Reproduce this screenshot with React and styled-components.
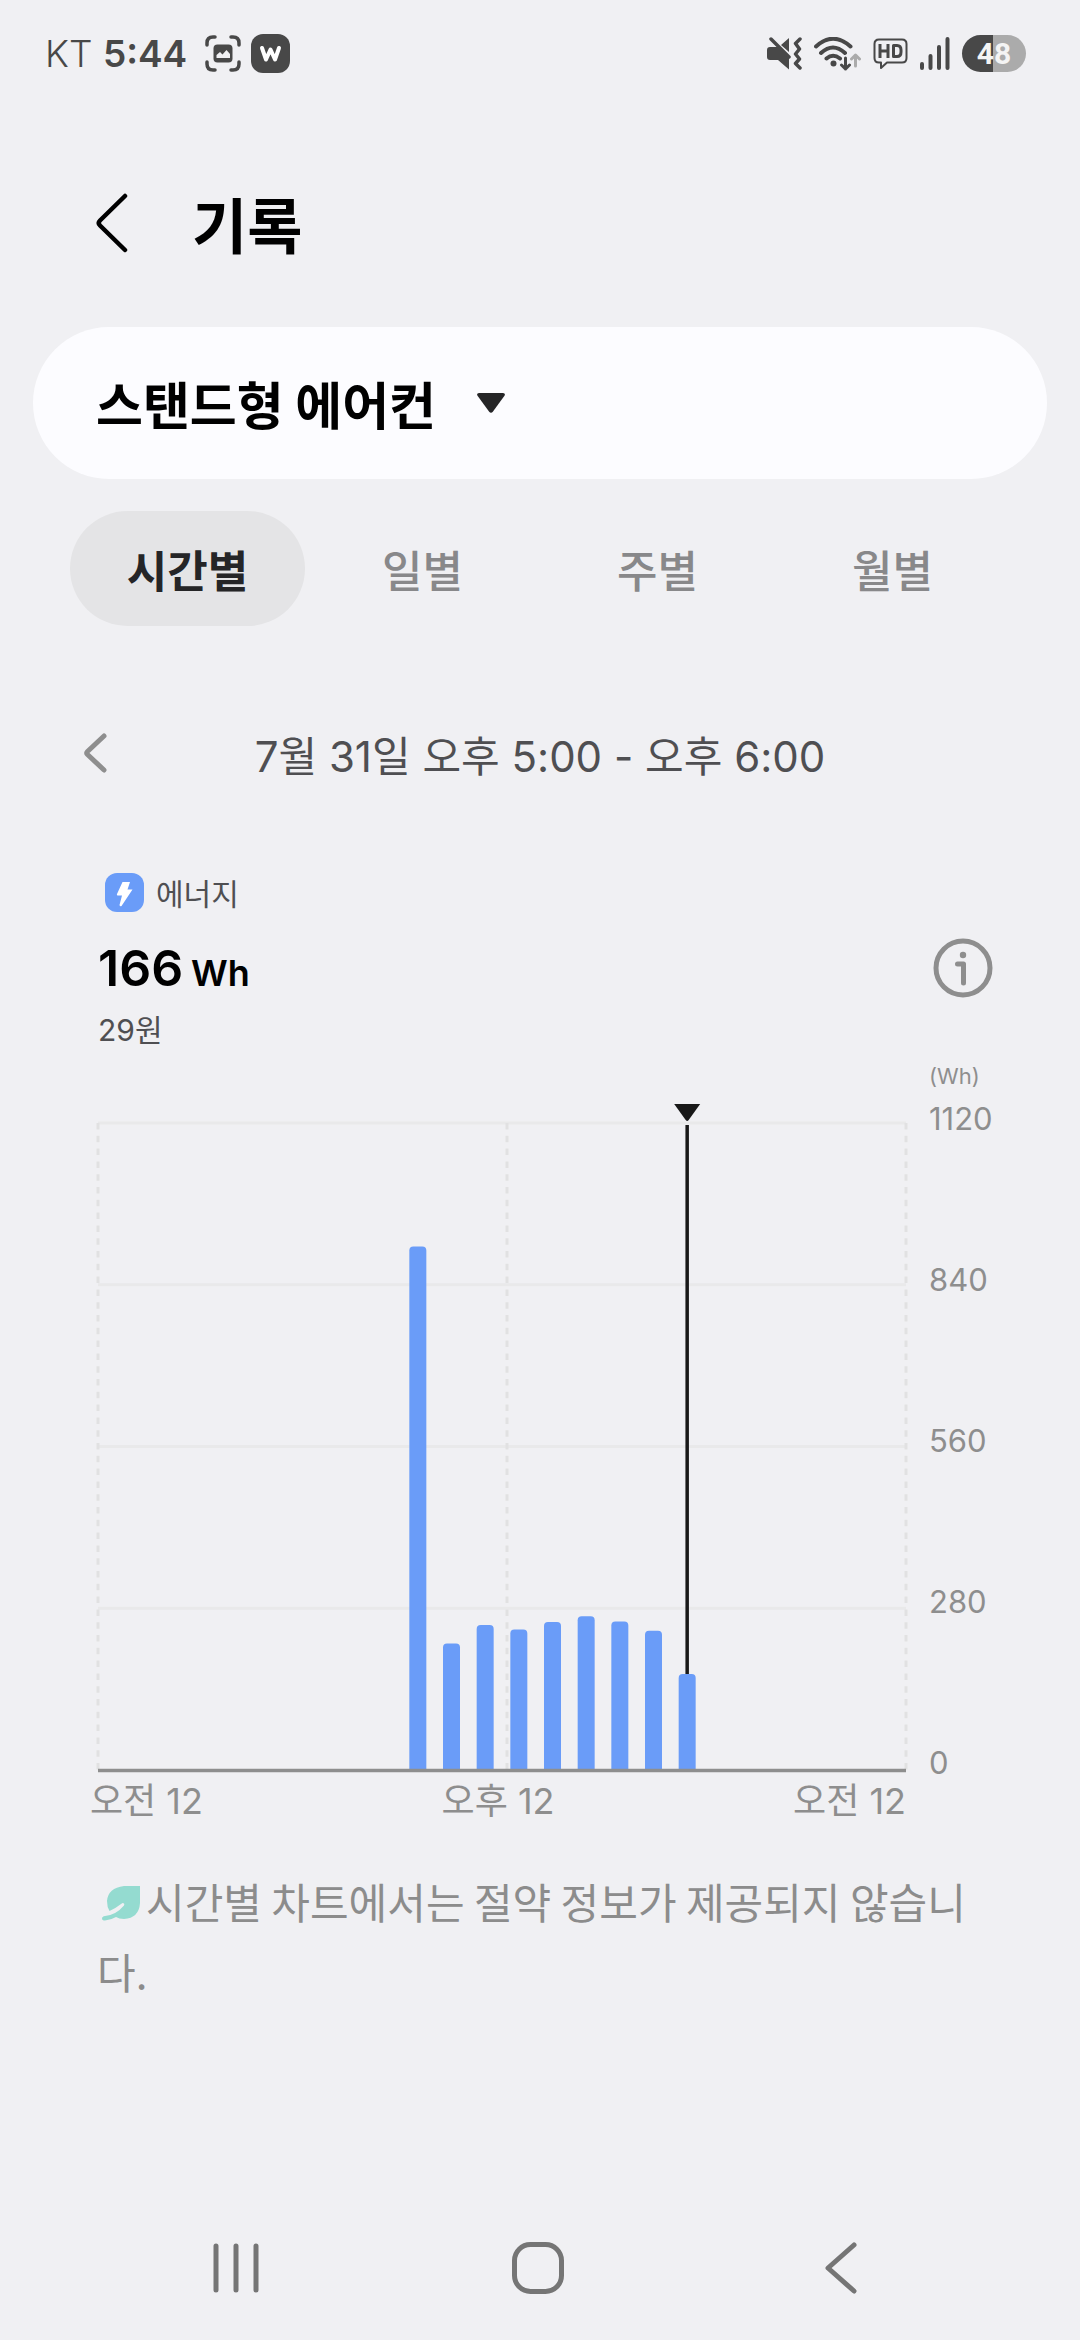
import React, {useState} from 'react';
import styled, {createGlobalStyle} from 'styled-components';

const TABS = ['시간별', '일별', '주별', '월별'];

// Hourly consumption in Wh
const USAGE = [
    {hour: 9, value: 906},
    {hour: 10, value: 219},
    {hour: 11, value: 251},
    {hour: 12, value: 243},
    {hour: 13, value: 256},
    {hour: 14, value: 266},
    {hour: 15, value: 257},
    {hour: 16, value: 241},
    {hour: 17, value: 166},
];

const MAX = 1120;
const SCALE = [1120, 840, 560, 280, 0];
const PLOT = {left: 8, right: 816, top: 23, bottom: 670};

const App = () => {

    const [tab, setTab] = useState('시간별');

    return (
        <>
            <GlobalStyle/>
            <Page>
                <StatusBar/>

                <Header>
                    <IconButton aria-label="뒤로">
                        <svg width="32" height="60" viewBox="0 0 32 60">
                            <path d="M29 3L4 27.5Q1.5 30 4 32.5L29 57" fill="none" stroke="#000" strokeWidth="4.5" strokeLinecap="round"/>
                        </svg>
                    </IconButton>
                    <h1>기록</h1>
                </Header>

                <main>
                    <DeviceCard>
                        <select aria-label="기기" defaultValue="ac">
                            <option value="ac">스탠드형 에어컨</option>
                        </select>
                        <svg width="28" height="20" viewBox="0 0 28 20">
                            <path d="M2 0H26Q29 .5 27.3 3L16 18.5Q14 21 12 18.5L.7 3Q-1 .5 2 0Z" fill="#252527"/>
                        </svg>
                    </DeviceCard>

                    <Tabs role="tablist">
                        {TABS.map((name) => (
                            <Tab
                                key={name}
                                role="tab"
                                aria-selected={tab === name}
                                $active={tab === name}
                                onClick={() => setTab(name)}
                            >
                                {name}
                            </Tab>
                        ))}
                    </Tabs>

                    <Period>
                        <IconButton aria-label="이전">
                            <svg width="50" height="40" viewBox="0 0 50 40">
                                <path d="M34 3L17.5 18.5Q16 20 17.5 21.5L34 37" fill="none" stroke="#8e8e8e" strokeWidth="5" strokeLinecap="round"/>
                            </svg>
                        </IconButton>
                        <p>7월 31일 오후 5:00 - 오후 6:00</p>
                        <span/>
                    </Period>

                    <Summary>
                        <div>
                            <Kind>
                                <svg width="39" height="39" viewBox="0 0 39 39">
                                    <rect width="39" height="39" rx="12" fill="#6a9cf8"/>
                                    <path d="M17.5 9H25L22.5 16.5H27.5L16.5 33Q15 34 14.5 32L17 22.5H12.5Q11.5 22 12 21Z" fill="#fff"/>
                                </svg>
                                에너지
                            </Kind>
                            <Amount>166<small>Wh</small></Amount>
                            <Cost>29원</Cost>
                        </div>
                        <InfoButton aria-label="정보">
                            <svg width="60" height="60" viewBox="0 0 60 60" fill="none" stroke="#8e8e8e" strokeLinecap="round" strokeLinejoin="round">
                                <circle cx="30" cy="30" r="27" strokeWidth="5"/>
                                <circle cx="30" cy="17" r="3.2" fill="#8e8e8e" stroke="none"/>
                                <path d="M24.5 26H30.5V45" strokeWidth="5"/>
                            </svg>
                        </InfoButton>
                    </Summary>

                    <UsageChart/>

                    <Note>
                        <svg width="38" height="35" viewBox="0 0 38 35">
                            <path d="M22 0H38V17Q37 32 22 33Q17 33 14 31Q9 34 3 34.5Q0 34.5 0 32.5Q0 30.5 3 30Q14 29 22 19.5Q23 17 20.5 17Q14 22 7.5 25Q5 21 5 15Q6 2 22 0Z" fill="#94dbd0"/>
                        </svg>
                        시간별 차트에서는 절약 정보가 제공되지 않습니다.
                    </Note>
                </main>

                <NavBar>
                    <IconButton aria-label="최근 앱">
                        <svg width="46" height="50" viewBox="0 0 46 50">
                            <path d="M3 3V47M23 3V47M43 3V47" stroke="#757575" strokeWidth="5" strokeLinecap="round"/>
                        </svg>
                    </IconButton>
                    <IconButton aria-label="홈">
                        <svg width="52" height="52" viewBox="0 0 52 52">
                            <rect x="2.5" y="2.5" width="47" height="47" rx="16" fill="none" stroke="#757575" strokeWidth="5"/>
                        </svg>
                    </IconButton>
                    <IconButton aria-label="뒤로 가기">
                        <svg width="32" height="52" viewBox="0 0 32 52">
                            <path d="M29 3L3 26L29 49" fill="none" stroke="#757575" strokeWidth="5" strokeLinecap="round" strokeLinejoin="round"/>
                        </svg>
                    </IconButton>
                </NavBar>
            </Page>
        </>
    )
}

// Status bar
const StatusBar = () => {
    return (
        <Status>
            <Clock>KT <b>5:44</b></Clock>
            <svg width="36" height="37" viewBox="0 0 36 37">
                <path d="M2 10V8Q2 2 8 2H10M26 2H28Q34 2 34 8V10M34 27V29Q34 35 28 35H26M10 35H8Q2 35 2 29V27" fill="none" stroke="#484848" strokeWidth="3.5" strokeLinecap="round"/>
                <rect x="8.5" y="9.5" width="19" height="18" rx="4" fill="#484848"/>
                <path d="M11.5 23V20L15 17L17.5 19.5L21.5 15L25 19V23Z" fill="#f0f0f3"/>
            </svg>
            <svg width="39" height="39" viewBox="0 0 39 39">
                <rect width="39" height="39" rx="12" fill="#484848"/>
                <path d="M11 14L15 25.5L19.5 15.5L24 25.5L28 14" fill="none" stroke="#fff" strokeWidth="4" strokeLinecap="round" strokeLinejoin="round"/>
            </svg>

            <Indicators>
                <svg width="35" height="34" viewBox="0 0 35 34">
                    <path d="M3 10H11L22 21V32.5L11 23H3Q0 23 0 20V13Q0 10 3 10ZM14 8L22 1V15Z" fill="#484848"/>
                    <path d="M4 2L22 20" stroke="#484848" strokeWidth="3.5" strokeLinecap="round"/>
                    <path d="M33 2L28.5 6.5L32.5 12L28.5 17L32.5 22L28.5 26.5L33 31" fill="none" stroke="#484848" strokeWidth="3.5" strokeLinecap="round" strokeLinejoin="round"/>
                </svg>
                <svg width="47" height="34" viewBox="0 0 47 34" fill="none" stroke="#484848" strokeWidth="4" strokeLinecap="round" strokeLinejoin="round">
                    <path d="M2 9.5Q19 -6 36.5 9.5M7 16Q19 5 31 16M12.5 21.5Q19 16 26 21.5"/>
                    <circle cx="19.5" cy="26.5" r="3" fill="#484848" stroke="none"/>
                    <path d="M31.5 21V32M27.5 28L31.5 32L35.5 28" strokeWidth="3"/>
                    <path d="M41.5 29V18M37.5 22L41.5 18L45.5 22" stroke="#ababab" strokeWidth="3"/>
                </svg>
                <svg width="35" height="32" viewBox="0 0 35 32" fill="none" stroke="#484848" strokeLinejoin="round">
                    <path d="M6 1.5H29Q33.5 1.5 33.5 6V20Q33.5 24.5 29 24.5H14L8 30V24.5H6Q1.5 24.5 1.5 20V6Q1.5 1.5 6 1.5Z" strokeWidth="2"/>
                    <path d="M7 6V20M15 6V20M7 13H15M20.500 7.500V18.500H24Q28 18.500 28 14V12Q28 7.500 24 7.500Z" strokeWidth="3"/>
                </svg>
                <svg width="30" height="34" viewBox="0 0 30 34">
                    <path d="M2 27V31M10.5 19V31M19 10V31M27.5 2V31" stroke="#484848" strokeWidth="4" strokeLinecap="round"/>
                </svg>
                <Battery>48</Battery>
            </Indicators>
        </Status>
    )
}

// Chart
const UsageChart = () => {
    const height = PLOT.bottom - PLOT.top;
    const slot = (PLOT.right - PLOT.left) / 24;
    const yOf = (value) => PLOT.bottom - (value / MAX) * height;
    const selected = USAGE[USAGE.length - 1];
    const markerX = PLOT.left + (selected.hour + 0.5) * slot;

    return (
        <Chart>
            <Unit>(Wh)</Unit>
            <svg viewBox="0 0 820 682" role="img" aria-label="시간별 에너지 사용량">
                {SCALE.slice(0, 4).map((value) => (
                    <line key={value} x1={PLOT.left} x2={PLOT.right} y1={yOf(value)} y2={yOf(value)} stroke="#e9e9ea" strokeWidth="3"/>
                ))}
                {[PLOT.left, 417, PLOT.right].map((x) => (
                    <line key={x} x1={x} x2={x} y1={PLOT.top} y2={PLOT.bottom} stroke="#e1e1e2" strokeWidth="3" strokeDasharray="6.5 6.3"/>
                ))}
                {USAGE.map(({hour, value}) => {
                    const x = PLOT.left + (hour + 0.5) * slot - 8.5;
                    const y = yOf(value);
                    return (
                        <path
                            key={hour}
                            d={`M${x} ${PLOT.bottom}V${y + 4}q0 -4 4 -4h9q4 0 4 4V${PLOT.bottom}Z`}
                            fill="#6a9cf8"
                        />
                    )
                })}
                <line x1={PLOT.left} x2={PLOT.right} y1="670.5" y2="670.5" stroke="#8e8e8e" strokeWidth="3.5"/>
                <line x1={markerX} x2={markerX} y1="25" y2={yOf(selected.value)} stroke="#181818" strokeWidth="3.5"/>
                <path d={`M${markerX - 13} 4h26l-11.5 16q-1.5 2 -3 0Z`} fill="#181818"/>
            </svg>
            <Scale>
                {SCALE.map((value) => <span key={value}>{value}</span>)}
            </Scale>
            <Hours>
                <span>오전 12</span>
                <span>오후 12</span>
                <span>오전 12</span>
            </Hours>
        </Chart>
    )
}

//Style
const GlobalStyle = createGlobalStyle`
  * {
    margin: 0;
    padding: 0;
    box-sizing: border-box;
  }

  body {
    background: #f0f0f3;
    font-family: "Inter", "Noto Sans CJK KR", sans-serif;
  }

  svg {
    display: block;
    flex-shrink: 0;
  }

  button, select {
    border: none;
    background: none;
    font-family: inherit;
    cursor: pointer;
  }
`;

const Page = styled.div`
  min-height: 100vh;
  display: flex;
  flex-direction: column;
`;

const Status = styled.div`
  height: 107px;
  padding: 0 54px 0 45px;
  display: flex;
  align-items: center;
  gap: 10px;
`;

const Clock = styled.span`
  margin-right: 8px;
  font-size: 37px;
  font-weight: 300;
  color: #484848;

  b {
    font-weight: 600;
  }
`;

const Indicators = styled.div`
  margin-left: auto;
  display: flex;
  align-items: center;
  gap: 12px;
`;

const Battery = styled.span`
  width: 64px;
  height: 37px;
  border-radius: 19px;
  background: linear-gradient(90deg, #484848 48%, #ababab 48%);
  color: #f4f4f4;
  font: 700 30px/37px Roboto, sans-serif;
  text-align: center;
`;

const IconButton = styled.button`
  display: flex;
  align-items: center;
  justify-content: center;
`;

const InfoButton = styled(IconButton)`
  align-self: flex-end;
  margin-bottom: 52px;
`;

const Header = styled.header`
  padding: 72px 96px 60px;
  display: flex;
  align-items: center;
  gap: 64px;

  h1 {
    font-family: "Noto Sans CJK KR", sans-serif;
    font-size: 60px;
    line-height: 88px;
  }
`;

const DeviceCard = styled.label`
  height: 152px;
  margin: 0 33px;
  padding: 0 63px;
  border-radius: 76px;
  background: #fcfcff;
  display: flex;
  align-items: center;
  gap: 40px;

  select {
    appearance: none;
    color: #000;
    font: 700 51px/76px "Noto Sans CJK KR", sans-serif;
  }
`;

const Tabs = styled.div`
  margin-top: 32px;
  padding: 0 70px;
  display: grid;
  grid-template-columns: repeat(4, 1fr);
`;

const Tab = styled.button`
  height: 115px;
  border-radius: 58px;
  background: ${({$active}) => $active ? '#e4e4e6' : 'transparent'};
  color: ${({$active}) => $active ? '#252527' : '#88888a'};
  font-family: "Noto Sans CJK KR", sans-serif;
  font-size: 44px;
  font-weight: ${({$active}) => $active ? 700 : 500};
`;

const Period = styled.div`
  margin-top: 67px;
  height: 120px;
  padding: 0 70px;
  display: grid;
  grid-template-columns: 50px 1fr 50px;
  align-items: center;

  p {
    color: #4f4f52;
    font-size: 42px;
    text-align: center;
  }
`;

const Summary = styled.section`
  margin-top: 55px;
  padding: 0 87px 0 98px;
  display: flex;
  justify-content: space-between;
`;

const Kind = styled.h2`
  padding-left: 7px;
  display: flex;
  align-items: center;
  gap: 12px;
  color: #4f4f52;
  font: 400 30px/48px "Noto Sans CJK KR", sans-serif;
`;

const Amount = styled.p`
  margin-top: 22px;
  height: 60px;
  display: flex;
  align-items: baseline;
  gap: 8px;
  font-size: 50px;
  font-weight: 600;
  line-height: 60px;

  small {
    font-size: 36px;
  }
`;

const Cost = styled.p`
  margin-top: 12px;
  height: 40px;
  color: #4f4f52;
  font-size: 30px;
  line-height: 40px;
`;

const Chart = styled.section`
  margin-top: 14px;
  padding: 0 60px 0 90px;
  display: grid;
  grid-template-columns: 1fr 91px;
  column-gap: 19px;
  color: #8e8e8e;

  svg {
    width: 100%;
  }
`;

const Unit = styled.span`
  grid-column: 2;
  margin-bottom: 12px;
  font-size: 22px;
  line-height: 24px;
`;

const Scale = styled.div`
  display: flex;
  flex-direction: column;
  justify-content: space-between;
  font-size: 31px;
  line-height: 38px;
`;

const Hours = styled.div`
  padding-right: 4px;
  height: 38px;
  display: flex;
  justify-content: space-between;
  font-size: 36px;
  line-height: 38px;
`;

const Note = styled.p`
  margin-top: 46px;
  padding: 0 97px;
  color: #8c8c8c;
  font: 400 42px/70px "Noto Sans CJK KR", sans-serif;

  svg {
    display: inline-block;
    margin: 0 6px 0 5px;
    vertical-align: -2px;
  }
`;

const NavBar = styled.nav`
  margin-top: auto;
  height: 145px;
  padding: 0 88px 0 85px;
  display: grid;
  grid-template-columns: repeat(3, 1fr);
`;

export default App;
